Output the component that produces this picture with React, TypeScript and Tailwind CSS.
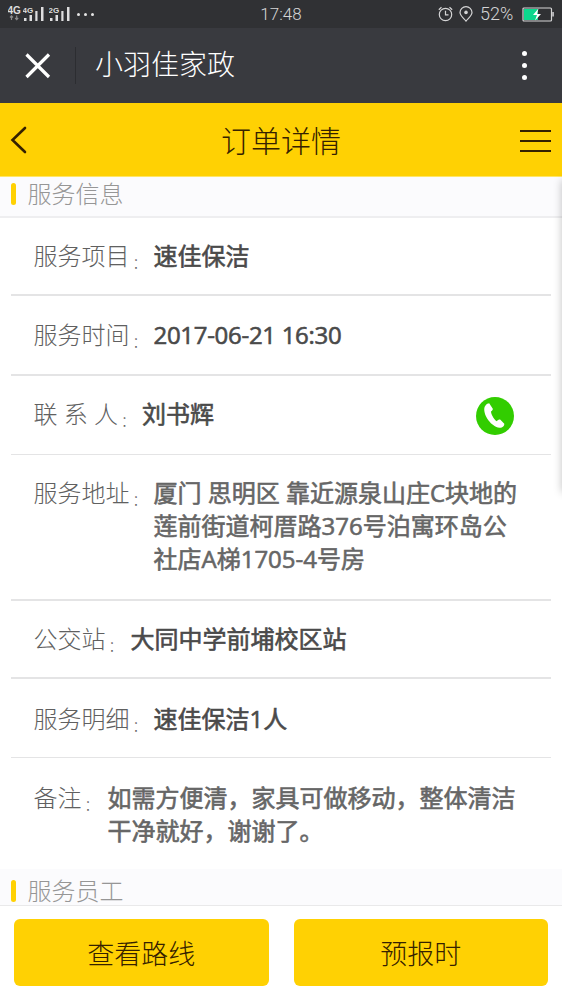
import React from "react";

interface DetailRowProps {
  label: string;
  className: string;
  muted?: boolean;
  valueClassName?: string;
  action?: React.ReactNode;
  children: React.ReactNode;
}

const SignalBars: React.FC<{ label: string }> = ({ label }) => (
  <svg width="21" height="16" viewBox="0 0 21 16" fill="#dededf">
    <text x="-0.5" y="6.5" fontSize="8" fontWeight="700" fontFamily="Liberation Sans">
      {label}
    </text>
    <rect x="1" y="12" width="2.5" height="3" />
    <rect x="6.5" y="9" width="2.5" height="6" />
    <rect x="12.3" y="5" width="2.2" height="10" />
    <rect x="18" y="1" width="2.5" height="14" />
  </svg>
);

const StatusBar: React.FC = () => (
  <div className="grid h-7 grid-cols-3 items-center bg-[#303134] text-[#d5d5d6]">
    <div className="flex items-center pl-2">
      <svg width="15" height="16" viewBox="0 0 15 16">
        <text x="-0.5" y="8" fontSize="10" fontWeight="700" fontFamily="Liberation Sans" fill="#dededf">
          4G
        </text>
        <path
          d="M3.5 14V10M2 11.5l1.5-1.7L5 11.5M8.7 9.5v4M7.2 12l1.5 1.7L10.2 12"
          fill="none"
          stroke="#8b8b8d"
          strokeWidth="1.2"
        />
      </svg>
      <SignalBars label="4G" />
      <div className="ml-[5px] flex">
        <SignalBars label="2G" />
      </div>
      <div className="ml-[7px] flex gap-1">
        <span className="size-[3px] rounded-full bg-[#e5e5e5]" />
        <span className="size-[3px] rounded-full bg-[#e5e5e5]" />
        <span className="size-[3px] rounded-full bg-[#e5e5e5]" />
      </div>
    </div>
    <div className="text-center font-['Roboto'] text-[17px] leading-7 font-light">17:48</div>
    <div className="flex items-center justify-end pr-2">
      <svg width="15" height="16" viewBox="0 0 15 16" fill="none" stroke="#d5d5d6" strokeWidth="1.2">
        <circle cx="7.5" cy="8.5" r="6.2" />
        <path d="M7.5 4.8v4h3M.8 3.8L3.5 1.2M14.2 3.8L11.5 1.2" />
      </svg>
      <svg className="ml-[6px]" width="14" height="16" viewBox="0 0 14 16" fill="none" stroke="#d5d5d6" strokeWidth="1.2">
        <path d="M7 15C4.5 12 1 9.8 1 6.6a6 6 0 0 1 12 0C13 9.8 9.5 12 7 15z" />
        <circle cx="7" cy="6.4" r="1.2" fill="#d5d5d6" />
      </svg>
      <span className="ml-[7px] w-[34px] font-['Roboto'] text-[18px] leading-7 font-light">52%</span>
      <svg className="ml-2" width="32" height="15" viewBox="0 0 32 15">
        <rect x="1" y="1" width="28.5" height="13" rx="1" fill="none" stroke="#d5d5d6" strokeWidth="1.2" />
        <rect x="2" y="2" width="14" height="11" fill="#0cd78d" />
        <path d="M16.5 1.5L11 8h4l-2 5.5L19 7h-4z" fill="#fff" />
        <rect x="30.3" y="5" width="1.5" height="4.5" fill="#d5d5d6" />
      </svg>
    </div>
  </div>
);

const TitleBar: React.FC = () => (
  <div className="flex h-[75px] items-center bg-[#393a3f] text-white">
    <button className="ml-6">
      <svg width="28" height="28" viewBox="0 0 28 28" stroke="#fff" strokeWidth="3.2">
        <path d="M2.5 2.5l22.5 22.5M25 2.5L2.5 25" />
      </svg>
    </button>
    <div className="ml-[23px] h-[37px] w-px bg-[#2c2d31]" />
    <h1 className="ml-[19px] flex-1 pb-[3px] text-[28px] leading-10 font-light">小羽佳家政</h1>
    <button className="mr-[35px] flex flex-col gap-[7px]">
      <span className="size-[5px] rounded-full bg-white" />
      <span className="size-[5px] rounded-full bg-white" />
      <span className="size-[5px] rounded-full bg-white" />
    </button>
  </div>
);

const PageHeader: React.FC = () => (
  <div className="flex h-[74px] items-center justify-between border-b border-[#ffe666] bg-[#ffd103] pr-[11px] pl-[10px] text-[#352100]">
    <button className="w-[31px]">
      <svg width="18" height="28" viewBox="0 0 18 28" fill="none" stroke="currentColor" strokeWidth="2.6" strokeLinecap="round">
        <path d="M15 2L2.5 14 15 26" />
      </svg>
    </button>
    <h2 className="pt-[2px] pl-px text-[30px] leading-10 font-light">订单详情</h2>
    <button className="flex flex-col gap-2 pt-[2px]">
      <span className="h-[2px] w-[31px] bg-current" />
      <span className="h-[2px] w-[31px] bg-current" />
      <span className="h-[2px] w-[31px] bg-current" />
    </button>
  </div>
);

const SectionTitle: React.FC<{ children: React.ReactNode; className: string }> = ({ children, className }) => (
  <div className={`flex border-[#eeeef0] bg-[#fbfbfd] pl-[11px] ${className}`}>
    <span className="mt-[6px] h-[22px] w-[5px] rounded-full bg-[#ffd103]" />
    <span className="ml-[11.5px] text-[24px] leading-[34px] font-light text-[#969696]">{children}</span>
  </div>
);

const DetailRow: React.FC<DetailRowProps> = ({ label, className, muted, valueClassName = "", action, children }) => (
  <div className={`mx-[11px] flex border-[#e4e4e5] pl-[22.5px] text-[24px] leading-[33px] ${className}`}>
    <span className="shrink-0 font-light whitespace-pre text-[#606060]">{label}</span>
    <span className="w-6 shrink-0 pt-[7px] pl-[3px] text-[14px] font-light text-[#606060]">：</span>
    <div
      className={`[-webkit-text-stroke:0.6px_currentColor] ${muted ? "text-[#666]" : "text-[#4a4a4a]"} ${valueClassName}`}
    >
      {children}
    </div>
    {action}
  </div>
);

const PhoneButton: React.FC = () => (
  <button className="mr-[37px] ml-auto size-[38px] rounded-full bg-[#32cd00]">
    <svg width="38" height="38" viewBox="0 0 38 38">
      <path
        d="M9.5 8.5C10.5 7 12 6.3 13.2 6.3L16.8 11.8C17 12.6 16.5 13.4 15 14.4C15 17 17.5 21.5 20.6 24.2C22 23 23.3 22.3 24.4 22.7L28.3 26.7C28.5 28.7 26.5 31 23.5 30.8C15.5 29.7 7.5 19 8.3 11.3C8.4 10.2 8.8 9.3 9.5 8.5Z"
        fill="#fff"
      />
    </svg>
  </button>
);

const FooterActions: React.FC = () => (
  <div className="flex h-[95px] justify-between border-t border-[#e9e9ea] bg-white px-[14px] pt-[13px] text-[27px] font-light text-[#352100]">
    <button className="h-[67px] w-[254.5px] rounded-md bg-[#ffd103] pt-1">查看路线</button>
    <button className="h-[67px] w-[254.5px] rounded-md bg-[#ffd103] pt-1">预报时</button>
  </div>
);

export default function App() {
  return (
    <div className="relative flex h-[1000px] w-[562px] flex-col overflow-hidden bg-white font-['Open_Sans','Noto_Sans_CJK_SC',sans-serif]">
      <StatusBar />
      <TitleBar />
      <PageHeader />

      <SectionTitle className="h-[41px] border-b-2">服务信息</SectionTitle>
      <DetailRow label="服务项目" className="h-[78px] border-b-2 pt-[21px]">
        速佳保洁
      </DetailRow>
      <DetailRow label="服务时间" className="h-20 border-b-2 pt-[22px]" valueClassName="tracking-[-0.3px]">
        2017-06-21 16:30
      </DetailRow>
      <DetailRow label="联 系 人" className="h-[79px] border-b pt-[21px]" action={<PhoneButton />}>
        刘书辉
      </DetailRow>
      <DetailRow label="服务地址" className="h-[146px] border-b-2 pt-[21px]" muted>
        厦门 思明区 靠近源泉山庄C块地的
        <br />
        莲前街道柯厝路376号泊寓环岛公
        <br />
        社店A梯1705-4号房
      </DetailRow>
      <DetailRow label="公交站" className="h-[78px] border-b-2 pt-[21px]" valueClassName="ml-px">
        大同中学前埔校区站
      </DetailRow>
      <DetailRow label="服务明细" className="h-[79px] border-b pt-[23px]">
        速佳保洁1人
      </DetailRow>
      <DetailRow label="备注" className="h-[111px] pt-[23px]" valueClassName="ml-[2px]" muted>
        如需方便清，家具可做移动，整体清洁
        <br />
        干净就好，谢谢了。
      </DetailRow>

      <SectionTitle className="h-9 pt-[5px]">服务员工</SectionTitle>
      <FooterActions />

      {/* Edge shadow of the off-canvas menu */}
      <div className="absolute top-[180px] -right-2 h-[312px] w-2 shadow-[0_0_8px_rgba(0,0,0,0.25)]" />
    </div>
  );
}
